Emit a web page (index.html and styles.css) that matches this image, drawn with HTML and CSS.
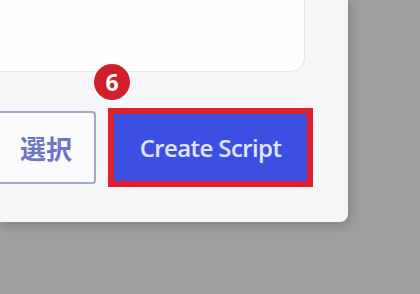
FILE: index.html
```html
<!DOCTYPE html>
<html lang="ja">
<head>
    <meta charset="UTF-8">
    <meta name="viewport" content="width=device-width, initial-scale=1.0">
    <title>Create Script</title>
    <link rel="stylesheet" href="styles.css">
</head>
<body>
    <div class="dialog">
        <!-- script body area -->
        <div class="editor"></div>

        <div class="footer">
            <button class="btn-select">選択</button>
            <div class="highlight">
                <span class="step">6</span>
                <button class="btn-create">Create Script</button>
            </div>
        </div>
    </div>
</body>
</html>
```

FILE: styles.css
```css
body {
    margin: 0;
    padding: 0;
    width: 420px;
    height: 294px;
    overflow: hidden;
    background-color: #9e9e9e;
    font-family: "Open Sans", "Noto Sans", "Noto Sans CJK JP", sans-serif;
}
.dialog {
    width: 348px;
    height: 222px;
    background-color: #f5f6f8;
    border-radius: 0 0 8px 0;
    box-shadow: 2px 3px 10px rgba(0, 0, 0, 0.18);
    overflow: hidden;
}
.editor {
    width: 304px;
    height: 71px;
    background-color: #fefefe;
    border-right: 1px solid #e4e5ea;
    border-bottom: 1px solid #e4e5ea;
    border-radius: 0 0 15px 0;
}
.footer {
    display: flex;
    justify-content: flex-end;
    align-items: center;
    gap: 12px;
    margin-top: 36px;
    padding-right: 35px;
}
.btn-select {
    flex-shrink: 0;
    width: 100px;
    height: 73px;
    background-color: #fbfbfd;
    border: 2px solid #a3a7c9;
    border-radius: 4px;
    color: #6e76c6;
    font-family: "Noto Sans CJK JP", sans-serif;
    font-size: 26px;
    font-weight: 700;
    padding: 0;
}
.highlight {
    position: relative;
    flex-shrink: 0;
    border: 6px solid #e1202f;
}
.btn-create {
    display: block;
    width: 193px;
    height: 67px;
    background-color: #3b4fe2;
    border: none;
    color: #e2e5fb;
    font-family: "Open Sans", sans-serif;
    font-size: 24px;
    font-weight: 600;
    letter-spacing: -0.6px;
    padding: 0;
}
.step {
    position: absolute;
    left: -22px;
    top: -52px;
    width: 36px;
    height: 36px;
    border: 2px solid #ffffff;
    border-radius: 50%;
    background-color: #d21e2a;
    color: #ffffff;
    font-family: "Open Sans", sans-serif;
    font-size: 23px;
    font-weight: 700;
    line-height: 36px;
    text-align: center;
}
```
